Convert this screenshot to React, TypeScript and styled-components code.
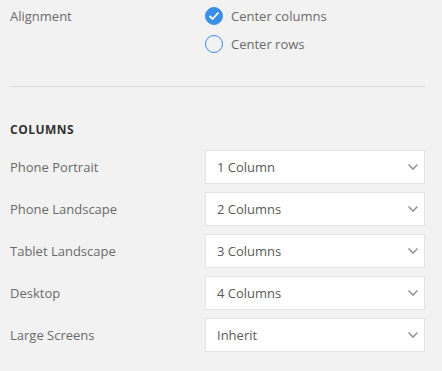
import React from "react";
import styled, { createGlobalStyle } from "styled-components";

const Global = createGlobalStyle`
  html, body { margin: 0; padding: 0; background: #f2f2f2; }
  body { font-family: "Open Sans", "Liberation Sans", sans-serif; }
`;

const Page = styled.div`
  padding: 2px 17px 0 10px;
  width: 415px;
  box-sizing: content-box;
`;

const Row = styled.div<{ $h: number }>`
  display: grid;
  grid-template-columns: 195px 1fr;
  align-items: ${(p) => (p.$h ? "center" : "start")};
  min-height: ${(p) => p.$h}px;
`;

const Label = styled.div<{ $lh?: number }>`
  font-size: 13px;
  color: #6a6a6a;
  line-height: ${(p) => p.$lh ?? 28}px;
`;

const Options = styled.div`
  display: flex;
  flex-direction: column;
`;

const Option = styled.label`
  display: flex;
  align-items: center;
  gap: 8px;
  height: 28px;
  font-size: 13px;
  color: #6a6a6a;
`;

const Circle = styled.span<{ $on: boolean }>`
  width: 18px;
  height: 18px;
  border-radius: 50%;
  box-sizing: border-box;
  display: flex;
  align-items: center;
  justify-content: center;
  background: ${(p) => (p.$on ? "#3a8ee8" : "transparent")};
  border: 1.5px solid #3a8ee8;
`;

const Divider = styled.hr`
  border: 0;
  border-top: 1px solid #dcdcdc;
  margin: 28px 0 0;
`;

const Heading = styled.h3`
  margin: 35px 0 12px;
  font-size: 12px;
  line-height: 16px;
  font-weight: 700;
  color: #333;
  letter-spacing: 0.5px;
`;

const SelectList = styled.div`
  display: flex;
  flex-direction: column;
  gap: 8px;
`;

const SelectBox = styled.div`
  height: 34px;
  box-sizing: border-box;
  background: #fff;
  border: 1px solid #e4e4e4;
  display: flex;
  align-items: center;
  justify-content: space-between;
  padding: 0 5px 0 11px;
  font-size: 13px;
  color: #5a5a5a;
`;

const Chevron = () => (
  <svg width="12" height="8" viewBox="0 0 12 8">
    <polyline points="1.5,1.5 6,6 10.5,1.5" fill="none" stroke="#999" strokeWidth="1.7" />
  </svg>
);

const Check = () => (
  <svg width="12" height="10" viewBox="0 0 12 10">
    <polyline points="1.5,5 4.5,8 10.5,1.5" fill="none" stroke="#fff" strokeWidth="1.8" />
  </svg>
);

const rows: [string, string][] = [
  ["Phone Portrait", "1 Column"],
  ["Phone Landscape", "2 Columns"],
  ["Tablet Landscape", "3 Columns"],
  ["Desktop", "4 Columns"],
  ["Large Screens", "Inherit"],
];

export default function App() {
  return (
    <Page>
      <Global />
      <Row $h={0}>
        <Label>Alignment</Label>
        <Options>
          <Option>
            <Circle $on>
              <Check />
            </Circle>
            Center columns
          </Option>
          <Option>
            <Circle $on={false} />
            Center rows
          </Option>
        </Options>
      </Row>
      <Divider />
      <Heading>COLUMNS</Heading>
      <SelectList>
        {rows.map(([l, v]) => (
          <Row $h={34} key={l}>
            <Label $lh={18}>{l}</Label>
            <SelectBox>
              {v}
              <Chevron />
            </SelectBox>
          </Row>
        ))}
      </SelectList>
    </Page>
  );
}
